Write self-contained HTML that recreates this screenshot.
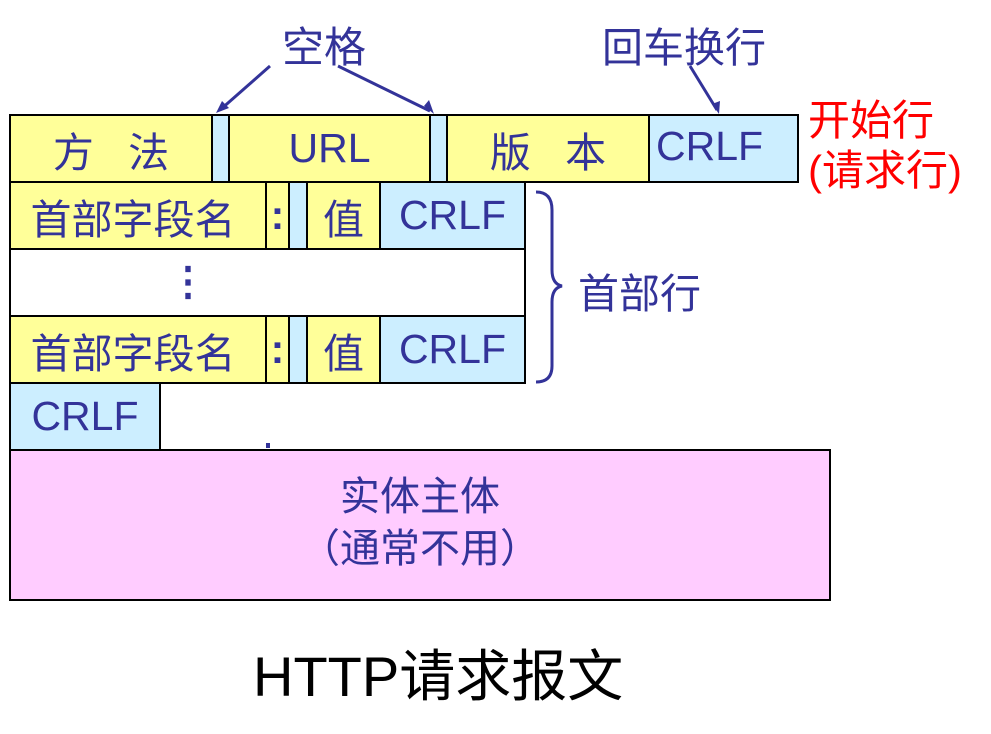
<!DOCTYPE html>
<html><head><meta charset="utf-8"><style>
body{margin:0;width:991px;height:734px;background:#fff;position:relative;overflow:hidden;font-family:"Liberation Sans","Noto Sans CJK SC",sans-serif;color:#333399}
.b{position:absolute;box-sizing:border-box;border:2px solid #000;display:flex;align-items:center;justify-content:center;font-size:41px}
.y{background:#ffff99}.c{background:#cceeff}.p{background:#ffccff}.w{background:#fff}
.t{position:absolute;font-size:41px;white-space:nowrap}
</style></head><body>
<div class="b y" style="left:9px;top:114px;width:204px;height:69px">方&nbsp;&nbsp;&nbsp;法</div>
<div class="b c" style="left:211px;top:114px;width:19px;height:69px"></div>
<div class="b y" style="left:228px;top:114px;width:203px;height:69px">URL</div>
<div class="b c" style="left:429px;top:114px;width:19px;height:69px"></div>
<div class="b y" style="left:446px;top:114px;width:204px;height:69px">版&nbsp;&nbsp;&nbsp;本</div>
<div class="b c" style="left:648px;top:114px;width:151px;height:69px;justify-content:flex-start;padding-left:6px;padding-bottom:4px">CRLF</div>

<div class="b y" style="left:9px;top:181px;width:258px;height:69px;padding-right:10px">首部字段名</div>
<div class="b y" style="left:265px;top:181px;width:25px;height:69px;font-weight:bold">:</div>
<div class="b c" style="left:288px;top:181px;width:20px;height:69px"></div>
<div class="b y" style="left:306px;top:181px;width:75px;height:69px">值</div>
<div class="b c" style="left:379px;top:181px;width:147px;height:69px">CRLF</div>

<div class="b w" style="left:9px;top:248px;width:517px;height:69px"></div>
<div class="t" style="left:168px;top:262px;font-size:40px;font-weight:bold;line-height:1">⋮</div>

<div class="b y" style="left:9px;top:315px;width:258px;height:69px;padding-right:10px">首部字段名</div>
<div class="b y" style="left:265px;top:315px;width:25px;height:69px;font-weight:bold">:</div>
<div class="b c" style="left:288px;top:315px;width:20px;height:69px"></div>
<div class="b y" style="left:306px;top:315px;width:75px;height:69px">值</div>
<div class="b c" style="left:379px;top:315px;width:147px;height:69px">CRLF</div>

<div class="b c" style="left:9px;top:382px;width:152px;height:69px">CRLF</div>
<div style="position:absolute;left:266px;top:443px;width:4px;height:5px;background:#333399"></div>
<div class="b p" style="left:9px;top:449px;width:822px;height:152px;flex-direction:column;font-size:40px;line-height:52px;padding-bottom:4px">实体主体<div>（通常不用）</div></div>

<div class="t" style="left:282px;top:14px;font-size:42px">空格</div>
<div class="t" style="left:602px;top:14px">回车换行</div>
<div class="t" style="left:808px;top:96px;color:#ff0000;line-height:50px;font-size:42px">开始行<br>(请求行)</div>
<div class="t" style="left:578px;top:260px">首部行</div>
<div class="t" style="left:253px;top:632px;color:#000;font-size:56px">HTTP请求报文</div>

<svg style="position:absolute;left:0;top:0" width="991" height="734">
<g stroke="#333399" stroke-width="3" fill="none">
<line x1="270" y1="66" x2="220" y2="110"/>
<line x1="338" y1="66" x2="430" y2="111"/>
<line x1="690" y1="66" x2="717" y2="110"/>
<path d="M536,192 Q552,192 552,210 L552,270 Q552,284 562,286 Q552,288 552,302 L552,366 Q552,382 536,382"/>
</g>
<g fill="#333399">
<polygon points="216,113 222,101 229,108"/>
<polygon points="434,114 424,106 429,100"/>
<polygon points="719,114 712,104 720,101"/>
</g>
</svg>
</body></html>
